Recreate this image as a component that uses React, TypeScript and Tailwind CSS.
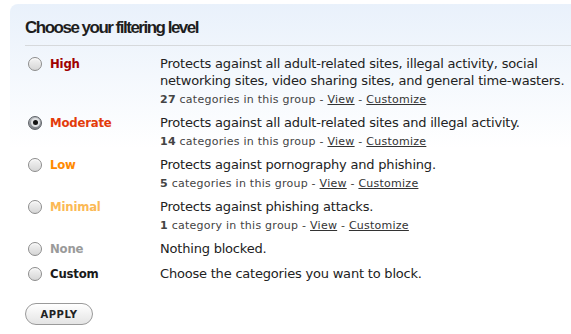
import React, { useState } from 'react';

type Level = {
    key: string;
    label: string;
    color: string;
    desc: React.ReactNode;
    count?: number;
    rowGap: string;
};

const LEVELS: Level[] = [
    {
        key: 'high',
        label: 'High',
        color: 'text-[#a00000]',
        desc: (
            <>
                Protects against all adult-related sites, illegal activity, social
                <br />
                networking sites, video sharing sites, and general time-wasters.
            </>
        ),
        count: 27,
        rowGap: 'mb-[4px]',
    },
    {
        key: 'moderate',
        label: 'Moderate',
        color: 'text-[#e33b0b]',
        desc: 'Protects against all adult-related sites and illegal activity.',
        count: 14,
        rowGap: 'mb-[4px]',
    },
    {
        key: 'low',
        label: 'Low',
        color: 'text-[#ff8a00]',
        desc: 'Protects against pornography and phishing.',
        count: 5,
        rowGap: 'mb-[4px]',
    },
    {
        key: 'minimal',
        label: 'Minimal',
        color: 'text-[#fbb956]',
        desc: 'Protects against phishing attacks.',
        count: 1,
        rowGap: 'mb-[4px]',
    },
    {
        key: 'none',
        label: 'None',
        color: 'text-[#9a9a9a]',
        desc: 'Nothing blocked.',
        rowGap: 'mb-[8px]',
    },
    {
        key: 'custom',
        label: 'Custom',
        color: 'text-[#1a1a1a]',
        desc: 'Choose the categories you want to block.',
        rowGap: 'mb-0',
    },
];

const Radio: React.FC<{ checked: boolean }> = ({ checked }) =>
    checked ? (
        <span className="flex h-[14px] w-[14px] items-center justify-center rounded-full border border-[#5d6166] bg-gradient-to-b from-[#b9bdc2] to-[#7d8187]">
            <span className="flex h-[9px] w-[9px] items-center justify-center rounded-full bg-[#dfe1e3]">
                <span className="h-[5px] w-[5px] rounded-full bg-[#111]" />
            </span>
        </span>
    ) : (
        <span className="block h-[14px] w-[14px] rounded-full border border-[#8c8c8c] bg-gradient-to-b from-[#f4f4f4] to-[#d6d6d6] shadow-[inset_0_1px_1px_rgba(255,255,255,0.9)]" />
    );

const App: React.FC = () => {
    const [level, setLevel] = useState('moderate');

    return (
        <div className="h-[334px] w-[571px] overflow-hidden bg-white pl-[10px] pt-[4px] font-['DejaVu_Sans',sans-serif] text-[13px] text-[#222]">
            <div className="rounded-tl-[8px] bg-gradient-to-b from-[#e9f1fb] via-white via-[45%] to-white pl-[15px]">
                <h2 className="border-b border-[#d6d9dc] pb-[6px] pt-[13px] font-['Liberation_Sans',Arial,sans-serif] text-[17px] leading-[22px] font-bold tracking-[-1.5px] text-[#1e1e1e]">
                    Choose your filtering level
                </h2>

                <div className="mt-[9px]">
                    {LEVELS.map((l) => (
                        <div
                            key={l.key}
                            className={`flex cursor-pointer ${l.rowGap}`}
                            onClick={() => setLevel(l.key)}
                        >
                            <div className="flex h-[17px] w-[25px] items-center pl-[3px]">
                                <Radio checked={level === l.key} />
                            </div>
                            <div className={`w-[110px] font-['DejaVu_Sans_Condensed','DejaVu_Sans',sans-serif] leading-[17px] font-bold tracking-[-0.2px] ${l.color}`}>
                                {l.label}
                            </div>
                            <div className="flex-1 whitespace-nowrap">
                                <div className="leading-[17px] tracking-[-0.2px]">{l.desc}</div>
                                {l.count !== undefined && (
                                    <div className="text-[11px] leading-[21px] tracking-[0.25px] text-[#444]">
                                        <b>{l.count}</b> {l.count === 1 ? 'category' : 'categories'} in this group -{' '}
                                        <a href="#" className="text-[#333] underline">View</a> -{' '}
                                        <a href="#" className="text-[#333] underline">Customize</a>
                                    </div>
                                )}
                            </div>
                        </div>
                    ))}
                </div>

                <div className="pt-[21px]">
                    <button className="h-[22px] w-[68px] rounded-full border border-[#9a9a9a] bg-gradient-to-b from-white to-[#e4e4e4] font-['DejaVu_Sans',sans-serif] text-[10px] font-bold tracking-[0.5px] text-[#222]">
                        APPLY
                    </button>
                </div>
            </div>
        </div>
    );
};

export default App;
